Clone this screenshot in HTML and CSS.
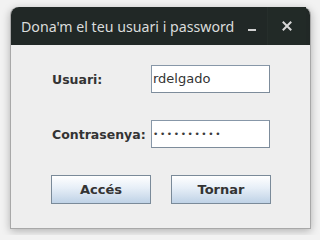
FILE: index.html
```html
<!DOCTYPE html>
<html>
<head>
<meta charset="utf-8">
<link rel="stylesheet" href="styles.css">
</head>
<body>
<div class="window">
  <div class="titlebar">
    <div class="title">Dona'm el teu usuari i password</div>
    <div class="wbtn min"><span class="minbar"></span></div>
    <div class="wbtn close">
      <svg width="10" height="10" viewBox="0 0 10 10"><path d="M1.5 1.5 L8.5 8.5 M8.5 1.5 L1.5 8.5" stroke="#d8d8d8" stroke-width="2" stroke-linecap="square"/></svg>
    </div>
  </div>
  <div class="content">
    <div class="form">
      <label class="label">Usuari:</label>
      <div class="field">rdelgado</div>
      <label class="label">Contrasenya:</label>
      <div class="field pass">••••••••••</div>
    </div>
    <div class="buttons">
      <div class="btn">Accés</div>
      <div class="btn">Tornar</div>
    </div>
  </div>
</div>
</body>
</html>
```
FILE: styles.css
```css
html, body {
  margin: 0;
  padding: 0;
}
body {
  width: 320px;
  height: 235px;
  background: #f2f2f2;
  overflow: hidden;
}
.window {
  margin: 7px 0 0 10px;
  width: 301px;
  height: 222px;
  box-sizing: border-box;
  border: 1px solid #a8a8a8;
  border-top: none;
  border-radius: 8px 8px 0 0;
  background: #eeeeee;
  box-shadow: 0 2px 8px rgba(0,0,0,0.28);
  display: flex;
  flex-direction: column;
}
.titlebar {
  height: 38px;
  flex: none;
  background: #212826;
  border-radius: 8px 8px 0 0;
  display: flex;
  align-items: center;
  padding-left: 10px;
  padding-right: 4px;
}
.title {
  font-family: "Noto Sans", "DejaVu Sans", sans-serif;
  font-size: 14.2px;
  color: #dadcdb;
  white-space: nowrap;
  flex: 1;
  padding-top: 1px;
}
.wbtn {
  height: 38px;
  display: flex;
  align-items: center;
  justify-content: center;
  flex: none;
}
.min {
  width: 30px;
  border-right: 1px solid #262e2b;
}
.minbar {
  display: block;
  width: 8px;
  height: 2px;
  background: #d0d0d0;
  margin-top: 8px;
}
.close {
  width: 38px;
  background: #222a27;
}
.close svg {
  display: block;
}
.content {
  padding: 20px 0 0 40px;
}
.form {
  display: grid;
  grid-template-columns: 100px 119px;
  grid-template-rows: 28px 28px;
  row-gap: 27px;
  align-items: center;
}
.label {
  font-family: "DejaVu Sans", sans-serif;
  font-weight: bold;
  font-size: 12.5px;
  color: #333333;
  padding-left: 1px;
  padding-top: 1px;
}
.field {
  height: 28px;
  box-sizing: border-box;
  border: 1px solid #8797a8;
  border-right-color: #7d8c9b;
  border-bottom-color: #7d8c9b;
  background: #ffffff;
  font-family: "DejaVu Sans", sans-serif;
  font-size: 13px;
  color: #333333;
  line-height: 26px;
  padding-left: 1px;
}
.field.pass {
  font-size: 9px;
  letter-spacing: 1.6px;
  padding-left: 1px;
  color: #3a3a3a;
}
.buttons {
  display: flex;
  gap: 20px;
  margin-top: 27px;
}
.btn {
  width: 100px;
  height: 29px;
  box-sizing: border-box;
  border: 1px solid #7a8a99;
  background: linear-gradient(to bottom, #ffffff 0%, #e6eef7 45%, #bfd2e6 100%);
  font-family: "DejaVu Sans", sans-serif;
  font-weight: bold;
  font-size: 13px;
  color: #333333;
  display: flex;
  align-items: center;
  justify-content: center;
}
```
